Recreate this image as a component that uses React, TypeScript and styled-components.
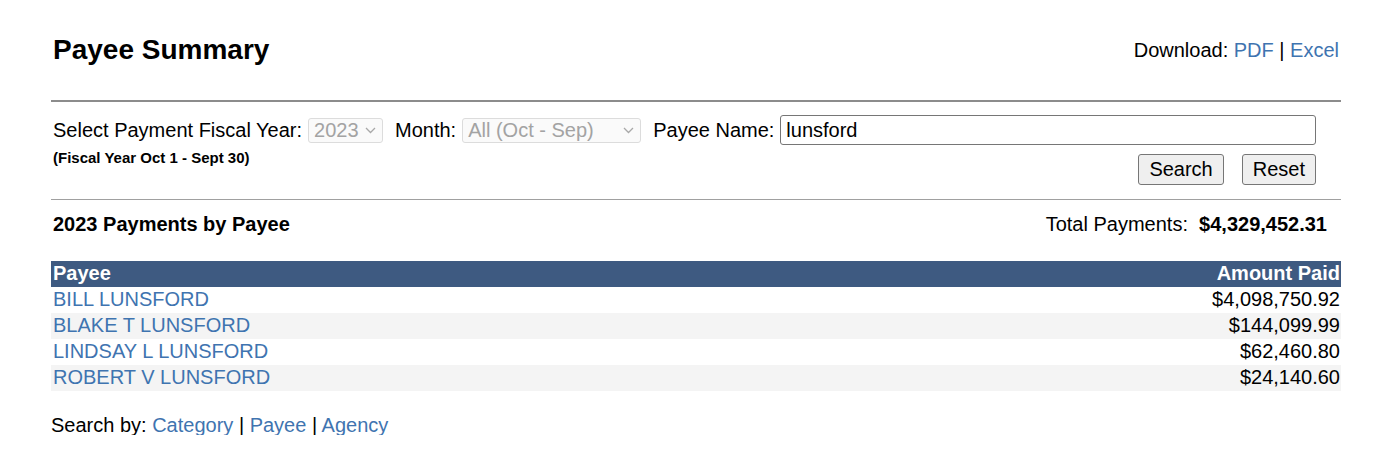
import styled, { createGlobalStyle } from 'styled-components';

const GlobalStyle = createGlobalStyle`
  body {
    margin: 0;
    background: #fff;
    font-family: "Liberation Sans", Arial, sans-serif;
    color: #000;
  }
`;

const Page = styled.div`
  width: 1290px;
  margin-left: 51px;
  padding-top: 35px;
`;

const TopBar = styled.div`
  display: flex;
  justify-content: space-between;
  align-items: center;
  height: 30px;
  padding-left: 2px;
`;

const Title = styled.h1`
  margin: 0;
  font-size: 28px;
  font-weight: 700;
  line-height: 30px;
`;

const Download = styled.div`
  font-size: 20px;
  padding-right: 2px;
`;

const Link = styled.a`
  color: #3f74b0;
  text-decoration: none;
`;

const Rule = styled.hr<{ thick?: boolean }>`
  margin: ${({ thick }) => (thick ? '35px 0 0' : '14px 0 0')};
  border: none;
  border-top: ${({ thick }) => (thick ? '2px solid #8c8c8c' : '1px solid #a0a0a0')};
  height: 0;
`;

const Filters = styled.div`
  margin-top: 13px;
  padding: 0 25px 0 2px;
`;

const FilterRow = styled.div`
  display: flex;
  align-items: center;
  height: 30px;
  font-size: 20px;
`;

const Label = styled.span`
  margin-right: 6px;
  white-space: nowrap;
`;

const SelectBox = styled.div<{ w: number }>`
  box-sizing: border-box;
  width: ${({ w }) => w}px;
  height: 25px;
  margin-right: 12px;
  padding: 0 6px 0 5px;
  display: flex;
  align-items: center;
  justify-content: space-between;
  border: 1px solid #dcdcdc;
  border-radius: 3px;
  color: #a3a3a3;
  font-size: 20px;
  background: #fafafa;
`;

const TextInput = styled.input`
  flex: 1;
  box-sizing: border-box;
  height: 30px;
  padding: 0 5px;
  border: 1px solid #767676;
  border-radius: 3px;
  font-family: inherit;
  font-size: 20px;
  color: #000;
`;

const SubRow = styled.div`
  display: flex;
  justify-content: space-between;
  align-items: flex-start;
  margin-top: 5px;
`;

const Note = styled.div`
  font-size: 15px;
  font-weight: 700;
  line-height: 16px;
`;

const Buttons = styled.div`
  display: flex;
  gap: 18px;
  margin-top: 4px;
`;

const Button = styled.button`
  height: 31px;
  padding: 0 10px;
  font-family: inherit;
  font-size: 20px;
  color: #000;
  background: #efefef;
  border: 1px solid #767676;
  border-radius: 3px;
`;

const SectionHead = styled.div`
  display: flex;
  justify-content: space-between;
  align-items: center;
  margin-top: 14px;
  height: 20px;
  padding: 0 14px 0 2px;
  font-size: 20px;
`;

const Bold = styled.span`
  font-weight: 700;
`;

const Table = styled.table`
  width: 100%;
  margin-top: 27px;
  border-collapse: collapse;
  font-size: 20px;
  line-height: 22px;
`;

const Th = styled.th<{ right?: boolean }>`
  height: 26px;
  box-sizing: border-box;
  padding: 0 1px 2px 2px;
  background: #3e5a81;
  color: #fff;
  font-weight: 700;
  text-align: ${({ right }) => (right ? 'right' : 'left')};
`;

const Row = styled.tr<{ alt: boolean }>`
  background: ${({ alt }) => (alt ? '#f4f4f4' : '#fff')};
`;

const Td = styled.td<{ right?: boolean }>`
  height: 26px;
  box-sizing: border-box;
  padding: 0 1px 3px 2px;
  text-align: ${({ right }) => (right ? 'right' : 'left')};
`;

const Footer = styled.div`
  margin-top: 24px;
  font-size: 20px;
  line-height: 20px;
`;

const Chevron = () => (
  <svg width="11" height="7" viewBox="0 0 11 7" fill="none">
    <path d="M1 1l4.5 4.5L10 1" stroke="#a8a8a8" strokeWidth="1.3" />
  </svg>
);

const rows = [
  ['BILL LUNSFORD', '$4,098,750.92'],
  ['BLAKE T LUNSFORD', '$144,099.99'],
  ['LINDSAY L LUNSFORD', '$62,460.80'],
  ['ROBERT V LUNSFORD', '$24,140.60'],
];

const App = () => {
  return (
    <>
      <GlobalStyle />
      <Page>
        <TopBar>
          <Title>Payee Summary</Title>
          <Download>
            Download: <Link href="#">PDF</Link> | <Link href="#">Excel</Link>
          </Download>
        </TopBar>
        <Rule thick />
        <Filters>
          <FilterRow>
            <Label>Select Payment Fiscal Year:</Label>
            <SelectBox w={75}>
              2023
              <Chevron />
            </SelectBox>
            <Label>Month:</Label>
            <SelectBox w={179}>
              All (Oct - Sep)
              <Chevron />
            </SelectBox>
            <Label>Payee Name:</Label>
            <TextInput defaultValue="lunsford" />
          </FilterRow>
          <SubRow>
            <Note>(Fiscal Year Oct 1 - Sept 30)</Note>
            <Buttons>
              <Button>Search</Button>
              <Button>Reset</Button>
            </Buttons>
          </SubRow>
        </Filters>
        <Rule />
        <SectionHead>
          <Bold>2023 Payments by Payee</Bold>
          <span>
            Total Payments:&nbsp; <Bold>$4,329,452.31</Bold>
          </span>
        </SectionHead>
        <Table>
          <thead>
            <tr>
              <Th>Payee</Th>
              <Th right>Amount Paid</Th>
            </tr>
          </thead>
          <tbody>
            {rows.map(([name, amount], i) => (
              <Row key={name} alt={i % 2 === 1}>
                <Td>
                  <Link href="#">{name}</Link>
                </Td>
                <Td right>{amount}</Td>
              </Row>
            ))}
          </tbody>
        </Table>
        <Footer>
          Search by: <Link href="#">Category</Link> | <Link href="#">Payee</Link> |{' '}
          <Link href="#">Agency</Link>
        </Footer>
      </Page>
    </>
  );
};

export default App;
